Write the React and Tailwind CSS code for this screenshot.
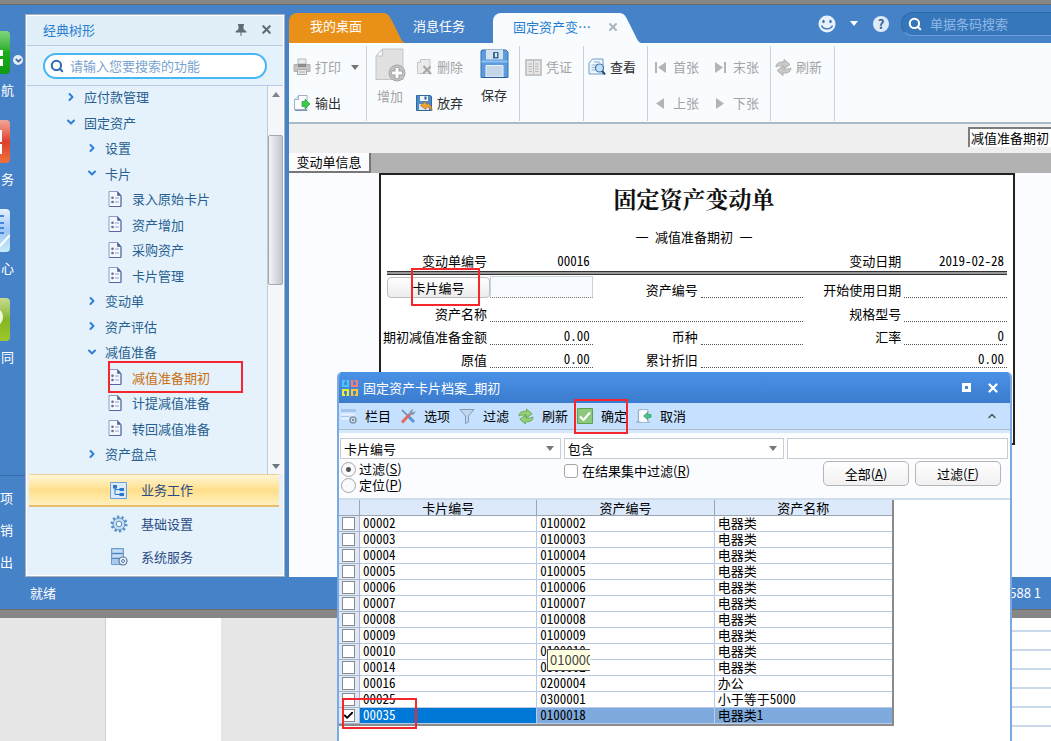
import React from 'react'
import { ChevronDown, ChevronRight, ChevronUp, Search, X, Check } from 'lucide-react'

const treeItems = [
    { label: '应付款管理', level: 0, open: false },
    { label: '固定资产', level: 0, open: true },
    { label: '设置', level: 1, open: false },
    { label: '卡片', level: 1, open: true },
    { label: '录入原始卡片', level: 2 },
    { label: '资产增加', level: 2 },
    { label: '采购资产', level: 2 },
    { label: '卡片管理', level: 2 },
    { label: '变动单', level: 1, open: false },
    { label: '资产评估', level: 1, open: false },
    { label: '减值准备', level: 1, open: true },
    { label: '减值准备期初', level: 2, active: true },
    { label: '计提减值准备', level: 2 },
    { label: '转回减值准备', level: 2 },
    { label: '资产盘点', level: 1, open: false },
    { label: '资产处置', level: 1, open: false },
]

const cards = [
    ['00002', '0100002', '电器类'],
    ['00003', '0100003', '电器类'],
    ['00004', '0100004', '电器类'],
    ['00005', '0100005', '电器类'],
    ['00006', '0100006', '电器类'],
    ['00007', '0100007', '电器类'],
    ['00008', '0100008', '电器类'],
    ['00009', '0100009', '电器类'],
    ['00010', '0100010', '电器类'],
    ['00014', '0500002', '电器类'],
    ['00016', '0200004', '办公'],
    ['00025', '0300001', '小于等于5000'],
    ['00035', '0100018', '电器类1'],
]

/* ---------- icons ---------- */

const DocIcon = () => (
    <svg width="14" height="16" viewBox="0 0 14 16">
        <path d="M1 .5h8.5l3.5 4v11H1z" fill="#f4f7fd" stroke="#8c9cc6" />
        <path d="M9.5 .5v4H13z" fill="#4f5f98" stroke="#4f5f98" strokeWidth=".6" />
        <path d="M13 5v10.5H1.5" fill="none" stroke="#5766a0" />
        <circle cx="4.5" cy="6.8" r="1.3" fill="#6c6c86" />
        <circle cx="4.5" cy="11" r="1.3" fill="#6c6c86" />
        <path d="M7 7h4M7 11h4" stroke="#8aa3d8" />
    </svg>
)

const PrintIcon = () => (
    <svg width="18" height="18" viewBox="0 0 18 18">
        <path d="M5 1h8v5H5z" fill="#eee" stroke="#b5b5b5" />
        <path d="M1 6.5h16v7H1z" fill="#c4c4c4" stroke="#b0b0b0" />
        <path d="M5 6h8v3H5z" fill="#8d8d8d" />
        <path d="M4.5 11.5h9v5h-9z" fill="#eaeaea" stroke="#aaa" />
        <path d="M6 14h6" stroke="#aaa" />
    </svg>
)

const ExportIcon = () => (
    <svg width="18" height="18" viewBox="0 0 18 18">
        <path d="M5.500 1.500H14v14H1.500v-10z" fill="#fbfdff" stroke="#9db1c8" />
        <path d="M5.500 1.500v4h-4" fill="#dfe9f4" stroke="#9db1c8" />
        <path d="M2 16.500h12.500" stroke="#7d96b4" />
        <path d="M9 7.500h3V5l5 5-5 5v-2.500H9z" fill="#3ecb4a" stroke="#2a9c36" strokeWidth=".7" />
    </svg>
)

const AddIcon = () => (
    <svg width="31" height="34" viewBox="0 0 31 34">
        <path d="M7.500 1h20.500v30.500H1V8z" fill="#e1e1e1" stroke="#c4c4c4" />
        <path d="M7.500 1v7H1z" fill="#f5f5f5" stroke="#c4c4c4" />
        <circle cx="22" cy="25" r="8" fill="#c2c2c2" stroke="#a6a6a6" />
        <path d="M22 19.500v11M16.500 25h11" stroke="#9d9d9d" strokeWidth="5" />
        <path d="M22 20v10M17 25h10" stroke="#fff" strokeWidth="3" />
    </svg>
)

const DeleteIcon = () => (
    <svg width="17" height="18" viewBox="0 0 17 18">
        <path d="M4.500 1.500H14v14H1.500v-11z" fill="#ebebeb" stroke="#c6c6c6" />
        <path d="M4.500 1.500v3h-3" fill="#fafafa" stroke="#c6c6c6" />
        <path d="M7.500 8l7.500 8M14.500 8.500L7 15.500" stroke="#a6a6a6" strokeWidth="2" />
    </svg>
)

const AbandonIcon = () => (
    <svg width="17" height="18" viewBox="0 0 17 18">
        <path d="M.5 1.500h14l1 1v14H.5z" fill="#4b8cc6" stroke="#32699f" />
        <path d="M4 2h8v5H4z" fill="#edf4fa" />
        <path d="M8.500 2.500h2v3h-2z" fill="#2e5f90" />
        <path d="M3 10h10v6H3z" fill="#dce9f4" />
        <path d="M10 7.500L4.500 11.500 10 15.500V13c3 0 4.500 1 6 3.500C16 12.500 14 10 10 10z" fill="#f3a33b" stroke="#b46d16" strokeWidth=".7" />
    </svg>
)

const SaveIcon = () => (
    <svg width="29" height="30" viewBox="0 0 29 30">
        <path d="M2 1h24l2 2v25.500H1V2z" fill="#5c9bdd" stroke="#3570ae" />
        <path d="M6 1h17v9.500H6z" fill="#d4e1ee" />
        <path d="M13 3h5.500v6.500H13z" fill="#3b6a99" />
        <path d="M15 4h2v4h-2z" fill="#dbe7f1" />
        <path d="M1.500 12.500h26" stroke="#8fc0ee" strokeWidth="2" />
        <path d="M6 16.500h17V28H6z" fill="#c5d6e8" stroke="#e9f3fb" />
        <path d="M3 28.500h23" stroke="#275b91" />
    </svg>
)

const VoucherIcon = () => (
    <svg width="17" height="17" viewBox="0 0 17 17">
        <path d="M1 1h15v15H1z" fill="#e6e6e6" stroke="#c6c6c6" strokeWidth="2" />
        <path d="M8.500 2v13" stroke="#bbb" />
        <path d="M3.500 5h3.500M3.500 7.500h3.500M3.500 10h3.500M3.500 12.500h3.500M10 5h3.500M10 7.500h3.500M10 10h3.500M10 12.500h3.500" stroke="#b8b8b8" />
    </svg>
)

const ViewIcon = () => (
    <svg width="18" height="18" viewBox="0 0 18 18">
        <path d="M4.500 1H15v15H1V5z" fill="#eff6fd" stroke="#6f9ccb" />
        <path d="M6 4h6M3.500 7h5M3.500 9.500h4M3.500 12h4" stroke="#8db1d8" />
        <circle cx="11.500" cy="10" r="4" fill="#bfe3fa" stroke="#48729e" strokeWidth="1.200" />
        <path d="M14 13l3 3.500" stroke="#27517d" strokeWidth="2.200" />
    </svg>
)

const RefreshIcon = ({ fill, stroke }) => (
    <svg width="17" height="17" viewBox="0 0 17 17">
        <path d="M1 8C1 4 4.500 2.500 9 3V.5l6 5-6 4.500V7.200C6 6.500 3 7 1 8z" fill={fill} stroke={stroke} strokeWidth=".8" />
        <path d="M16 9c0 4-3.500 5.500-8 5v2.500l-6-5L8 7v2.800C11 10.500 14 10 16 9z" fill={fill} stroke={stroke} strokeWidth=".8" />
    </svg>
)

const FirstIcon = () => (
    <svg width="13" height="13" viewBox="0 0 13 13"><path d="M1 1h2v11H1zM12 1v11L4 6.500z" fill="#b4b4b4" /></svg>
)
const LastIcon = () => (
    <svg width="13" height="13" viewBox="0 0 13 13"><path d="M10 1h2v11h-2zM1 1v11l8-5.500z" fill="#b4b4b4" /></svg>
)
const PrevIcon = () => (
    <svg width="13" height="13" viewBox="0 0 13 13"><path d="M10 1v11L2 6.500z" fill="#b4b4b4" /></svg>
)
const NextIcon = () => (
    <svg width="13" height="13" viewBox="0 0 13 13"><path d="M2 1v11l8-5.500z" fill="#b4b4b4" /></svg>
)

const Caret = ({ className }) => (
    <svg width="8" height="5" viewBox="0 0 8 5" className={className}><path d="M0 0h8L4 5z" fill="currentColor" /></svg>
)

const ColumnsIcon = () => (
    <svg width="16" height="16" viewBox="0 0 16 16">
        <path d="M0 1h15v3H0z" fill="#a5c4ec" />
        <path d="M0 6.500h14M0 10.500h8" stroke="#e9f3ff" strokeWidth="2" />
        <path d="M0 8.500h8" stroke="#a9c5e8" />
        <circle cx="12" cy="12" r="3" fill="#d5dde6" stroke="#8496ab" strokeWidth="1.500" />
        <circle cx="12" cy="12" r="1" fill="#63758a" />
    </svg>
)

const ToolsIcon = () => (
    <svg width="16" height="16" viewBox="0 0 16 16">
        <path d="M2 2l6 6" stroke="#5585bd" strokeWidth="1.500" />
        <path d="M8 8l6 6" stroke="#5d93d6" strokeWidth="3" />
        <path d="M2 14.500L10 6" stroke="#e2685c" strokeWidth="2.800" />
        <path d="M9.500 6.500c-.5-3 1.500-5 4-5.500L12 3.500l1 1 2.500-1.500c0 2.500-2.500 4.500-4.500 4z" fill="#8399b3" />
    </svg>
)

const FunnelIcon = () => (
    <svg width="16" height="16" viewBox="0 0 16 16">
        <path d="M1 1.500h14L9.500 8v6l-3 1.500V8z" fill="#c2d5ea" stroke="#7f9cbb" />
    </svg>
)

const OkIcon = () => (
    <svg width="16" height="16" viewBox="0 0 16 16">
        <path d="M.5 .5h15v15H.5z" fill="#8cc97c" stroke="#5fa24e" />
        <path d="M3 8.500l3.500 3.500L13 4.500" fill="none" stroke="#fff" strokeWidth="2.200" />
    </svg>
)

const CancelIcon = () => (
    <svg width="17" height="16" viewBox="0 0 17 16">
        <path d="M2.500 14.500v-13h10v13" fill="#f3f7fa" stroke="#8e9fb0" />
        <path d="M0 14.500h15" stroke="#8e9fb0" />
        <path d="M5 2h7v12H5z" fill="#fff" />
        <path d="M16 6.500h-3.500V4L8 8l4.500 4V9.500H16z" fill="#4dc488" stroke="#2c9962" strokeWidth=".7" />
    </svg>
)

const AppLogo = () => (
    <svg width="16" height="16" viewBox="0 0 16 16" fill="none" strokeWidth="2">
        <path d="M3 1H1v5h5V1H4.500" stroke="#4cc5ff" />
        <path d="M11.500 1H10v5h5V1h-2" stroke="#ff7a70" />
        <path d="M3 15H1v-5h5v5H4.500" stroke="#e6ee3b" />
        <path d="M11.500 15H10v-5h5v5h-2" stroke="#ffc53a" />
    </svg>
)

const PinIcon = () => (
    <svg width="12" height="12" viewBox="0 0 12 12" fill="#5e6c78">
        <path d="M3 0h6v1.500H8.500V5L11.500 7.500v1H.5v-1L3.500 5V1.500H3zM5.500 8.500h1V12h-1z" />
    </svg>
)

const TreeIcon = () => (
    <svg width="17" height="17" viewBox="0 0 17 17">
        <path d="M.5 .5h16v16H.5z" fill="#d9ebfb" stroke="#6fa0d6" />
        <path d="M3 3h4v3.500H3zM9.500 6h4.500v3H9.500zM9.500 11h4.500v3H9.500z" fill="#2f78c4" />
        <path d="M5 6v6.500h5M5 7.500h5" fill="none" stroke="#2f78c4" />
    </svg>
)

const GearIcon = () => (
    <svg width="18" height="18" viewBox="0 0 18 18">
        <circle cx="9" cy="9" r="7" fill="none" stroke="#5a8fc5" strokeWidth="3" strokeDasharray="2.200 2.200" />
        <circle cx="9" cy="9" r="6" fill="#c7e0f5" stroke="#5a8fc5" />
        <circle cx="9" cy="9" r="2.800" fill="#f0f7fd" stroke="#5a8fc5" />
    </svg>
)

const ServerIcon = () => (
    <svg width="18" height="18" viewBox="0 0 18 18">
        <path d="M1.500 .5h12v16h-12z" fill="#a8cbee" stroke="#6d9ccc" />
        <path d="M2 5.500h11M2 10.500h11" stroke="#4f83b9" />
        <path d="M3 3h9M3 8h9" stroke="#e2f0fc" />
        <circle cx="13" cy="13" r="4" fill="#eef4fb" stroke="#54749b" strokeWidth="1.200" />
        <circle cx="13" cy="13" r="1.500" fill="none" stroke="#54749b" />
    </svg>
)

const SmileIcon = () => (
    <svg width="18" height="18" viewBox="0 0 18 18">
        <circle cx="9" cy="9" r="8.500" fill="#e6f1fc" />
        <ellipse cx="5.500" cy="6.500" rx="1.200" ry="1.700" fill="#3a6fae" />
        <ellipse cx="12.500" cy="6.500" rx="1.200" ry="1.700" fill="#3a6fae" />
        <path d="M3.500 10.500c2 4.500 9 4.500 11 0" fill="none" stroke="#3a6fae" strokeWidth="1.300" />
    </svg>
)

/* ---------- left side ---------- */

const RailItem = ({ label, tile, children }) => (
    <a href="#" className="flex h-[89px] flex-col items-start">
        <span className={`block h-[43px] w-[10px] rounded-r-[4px] ${tile}`}>{children}</span>
        <span className="mt-[6px] pl-px">{label}</span>
    </a>
)

const Rail = () => (
    <nav className="flex w-[25px] shrink-0 flex-col overflow-hidden pt-[17px] text-[13px] text-white">
        <div className="flex">
            <div className="flex flex-col">
                <RailItem label="航" tile="bg-linear-to-b from-[#7fd67c] via-[#1cab1c] to-[#0f9a12]">
                    <svg width="10" height="43"><path d="M0 19h3v6H0zM0 28h3v7H0z" fill="#fff" /></svg>
                </RailItem>
                <RailItem label="务" tile="bg-linear-to-b from-[#f3a59b] via-[#dc3f2b] to-[#f0703c]">
                    <svg width="10" height="43"><path d="M0 10h2v12H0zM0 24h2v10H0z" fill="#fff" /></svg>
                </RailItem>
                <RailItem label="心" tile="bg-linear-to-b from-[#e4f0ff] via-[#9cc6f7] to-[#c9ecf8]">
                    <svg width="10" height="43">
                        <path d="M0 7h4M0 14h4M0 19h4M0 24h4" stroke="#4686d8" strokeWidth="2" />
                        <path d="M0 37L10 26" stroke="#fff" strokeWidth="2" />
                    </svg>
                </RailItem>
                <RailItem label="同" tile="bg-linear-to-b from-[#c8dc8e] via-[#86b526] to-[#9cc92b]">
                    <svg width="10" height="43"><path d="M0 12c4 4 4 10 0 14" fill="#f0f7dc" /></svg>
                </RailItem>
            </div>
            <button aria-label="更多" className="mt-6 -ml-px flex h-[10px] w-[10px] shrink-0 items-center justify-center rounded-full bg-[#e2ecf8] text-[#3a5f8c]">
                <ChevronDown size={9} strokeWidth={4} />
            </button>
        </div>
        <div className="mt-auto flex h-[102px] flex-col border-t border-[#386eae] pt-[6px]">
            <a href="#" className="h-8 leading-8">项</a>
            <a href="#" className="h-8 leading-8">销</a>
            <a href="#" className="h-8 leading-8">出</a>
        </div>
    </nav>
)

const TreeRow = ({ item }) => {
    const pad = ['pl-[36px]', 'pl-[57px]', 'pl-[80px]'][item.level]
    return (
        <li className={`flex items-center ${pad}`}>
            <a href="#" className={`relative flex h-full items-center whitespace-nowrap ${item.active ? 'text-[#c96f12]' : 'text-[#265f92]'}`}>
                {item.level === 2 ? (
                    <span className="mr-[9px] flex w-4 justify-center"><DocIcon /></span>
                ) : (
                    <span className="mr-[5px] flex w-4 justify-center text-[#2f7fd6]">
                        {item.open ? <ChevronDown size={12} strokeWidth={4} /> : <ChevronRight size={12} strokeWidth={4} />}
                    </span>
                )}
                {item.label}
                {item.active && <span className="pointer-events-none absolute -top-1 left-px h-8 w-[135px] border-2 border-[#f5262c]"></span>}
            </a>
        </li>
    )
}

const SidePanel = () => (
    <aside className="flex w-[260px] shrink-0 flex-col border border-[#a9b2bb] bg-white p-px text-[13px]">
        <div className="flex h-[30px] items-center border-b border-[#b5cde8] bg-[#e1eff9] pr-2.5 pb-0.5 pl-4">
            <h2 className="flex-1 text-[#2b7fd2]">经典树形</h2>
            <button aria-label="固定" className="mr-[13px]"><PinIcon /></button>
            <button aria-label="关闭" className="text-[#5e6c78]"><X size={13} strokeWidth={4} /></button>
        </div>
        <div className="flex h-10 items-center border-b border-[#b5cde8] bg-[#e6f2fb] px-4">
            <label className="flex h-[26px] w-full items-center gap-[6px] rounded-full border-2 border-[#45b7f5] bg-white px-[5px]">
                <Search size={14} strokeWidth={3.500} className="shrink-0 text-[#2b6cb5]" />
                <input aria-label="功能搜索" placeholder="请输入您要搜索的功能" className="w-full min-w-0 bg-transparent outline-none placeholder:text-[#7aa3d0]" />
            </label>
        </div>
        <div className="flex h-[388px] overflow-hidden bg-[#e6f2fb]">
            <ul className="-mt-0.5 grid h-[408px] flex-1 auto-rows-fr">
                {treeItems.map((item) => <TreeRow key={item.label} item={item} />)}
            </ul>
            <div className="flex w-4 flex-col items-center border-l border-[#c3c9cf] bg-[#f4f6f9]">
                <div className="flex h-[49px] w-full justify-center pt-[6px] text-[#7c858e]"><Caret className="rotate-180" /></div>
                <div className="h-[150px] w-full rounded-xs border border-[#a3a7b0] bg-linear-to-r from-[#f4f4f7] to-[#c3c5d0]"></div>
                <div className="mt-auto flex h-[10px] text-[#6d7780]"><Caret /></div>
            </div>
        </div>
        <nav className="flex flex-1 flex-col bg-[#e6f2fb] pr-1 pb-0.5 pl-0.5 text-[#2a4a86]">
            <a href="#" className="flex h-[33px] items-center gap-[14px] border-t border-b-2 border-t-[#eccf96] border-b-[#e9bd6c] bg-linear-to-b from-[#fff6d4] via-[#ffdf8a] to-[#fff0bd] pl-[81px]"><TreeIcon />业务工作</a>
            <a href="#" className="flex h-[33px] items-center gap-[13px] pl-[81px]"><GearIcon />基础设置</a>
            <a href="#" className="flex h-[33px] items-center gap-[13px] pl-[81px]"><ServerIcon />系统服务</a>
        </nav>
    </aside>
)

/* ---------- top of the work area ---------- */

const TabEdge = ({ fill }) => (
    <svg width="24" height="30" viewBox="0 0 24 30" className="shrink-0">
        <path d="M0 0c4 0 6 2 8 6l9 18c2 4 3 6 7 6H0z" fill={fill} />
    </svg>
)

const TabBar = () => (
    <header className="flex h-[38px] items-end text-[13px] text-white">
        <button className="h-[30px] w-[94px] rounded-tl-lg bg-[#e89017] pb-1">我的桌面</button>
        <TabEdge fill="#e89017" />
        <button className="h-[30px] w-[86px] pr-[22px] pb-1">消息任务</button>
        <div className="flex h-[30px] w-[126px] shrink-0 items-center justify-between rounded-tl-lg bg-[#f9fcff] pb-[3px] pl-5 text-[#1f7bd0]">
            <button>固定资产变⋯</button>
            <button aria-label="关闭标签" className="text-[#a9b4bf]"><X size={12} strokeWidth={4} /></button>
        </div>
        <TabEdge fill="#f9fcff" />
        <div className="flex h-full flex-1 items-center justify-end pb-px">
            <button aria-label="心情"><SmileIcon /></button>
            <button aria-label="更多选项" className="ml-[14px]"><Caret /></button>
            <button aria-label="帮助" className="ml-[15px] h-4 w-4 rounded-full bg-[#dfebf8] text-[13px] leading-4 font-bold text-[#35649b]">?</button>
            <label className="ml-3 flex h-6 w-[150px] items-center gap-2 rounded-l-full border-y border-l border-[#2f68a8] border-b-[#6ba0dc] bg-[#3676ba] pl-[6px]">
                <Search size={14} strokeWidth={3.500} className="shrink-0" />
                <input aria-label="单据搜索" placeholder="单据条码搜索" className="w-full min-w-0 bg-transparent outline-none placeholder:text-[#8fb9e6]" />
            </label>
        </div>
    </header>
)

const Tool = ({ icon, label, disabled = true }) => (
    <button className={`flex h-9 items-center gap-1 whitespace-nowrap ${disabled ? 'text-[#a3a3a3]' : 'text-[#2e2e2e]'}`}>
        <span className="flex w-[18px] justify-center">{icon}</span>
        {label}
    </button>
)

const Group = ({ className, children }) => (
    <div className={`my-[3px] flex h-[75px] shrink-0 border-r border-[#cdd1d5] ${className}`}>{children}</div>
)

const Ribbon = () => (
    <div className="flex h-[81px] border-b-2 border-[#a9bacb] bg-[#f9fcff] text-[13px]">
        <Group className="w-[78px] pl-1">
            <div className="flex flex-col pt-[3px]">
                <Tool icon={<PrintIcon />} label="打印" />
                <Tool icon={<ExportIcon />} label="输出" disabled={false} />
            </div>
            <button aria-label="打印选项" className="ml-[10px] h-[43px] text-[#777]"><Caret /></button>
        </Group>
        <Group className="w-[153px] pl-2">
            <button className="flex w-[30px] flex-col items-center gap-1 pt-0.5 text-[#a3a3a3]"><AddIcon /><span>增加</span></button>
            <div className="flex flex-col pt-[3px] pl-[10px]">
                <Tool icon={<DeleteIcon />} label="删除" />
                <Tool icon={<AbandonIcon />} label="放弃" disabled={false} />
            </div>
            <button className="ml-4 flex w-[30px] flex-col items-center gap-[6px] pt-[3px] text-[#2e2e2e]"><SaveIcon /><span>保存</span></button>
        </Group>
        <Group className="w-[64px] pt-[3px] pl-1"><Tool icon={<VoucherIcon />} label="凭证" /></Group>
        <Group className="w-[64px] pt-[3px] pl-1"><Tool icon={<ViewIcon />} label="查看" disabled={false} /></Group>
        <Group className="w-[123px] gap-[12px] pt-[3px] pl-[3px]">
            <div>
                <Tool icon={<FirstIcon />} label="首张" />
                <Tool icon={<PrevIcon />} label="上张" />
            </div>
            <div>
                <Tool icon={<LastIcon />} label="末张" />
                <Tool icon={<NextIcon />} label="下张" />
            </div>
        </Group>
        <Group className="w-[64px] pt-[3px] pl-[3px]"><Tool icon={<RefreshIcon fill="#c9c9c9" stroke="#a5a5a5" />} label="刷新" /></Group>
    </div>
)

/* ---------- change form ---------- */

const Label = ({ children }) => <div className="self-end pr-[3px] text-right leading-4 whitespace-nowrap">{children}</div>

const Value = ({ span = '', children }) => (
    <div className={`h-[17px] self-end border-b border-dotted border-[#555] pr-[3px] text-right leading-4 ${span}`}>{children}</div>
)

const ChangeForm = () => (
    <section className="mr-9 ml-[90px] h-[272px] border-2 border-[#222] bg-white pt-2 pr-[6px] font-['Noto_Sans_Mono_CJK_SC','Noto_Sans_CJK_SC',sans-serif] text-[13px] text-black">
        <h1 className="text-center font-['Noto_Serif_CJK_SC','Noto_Sans_CJK_SC',serif] text-[23px] leading-8 font-bold text-[#111]">固定资产变动单</h1>
        <p className="mt-3 text-center leading-5">一 减值准备期初 一</p>
        <div className="mt-1 grid grid-cols-[109px_1fr_108px_1fr_101px_1fr] leading-5">
            <div className="pr-[3px] text-right">变动单编号</div>
            <div className="pr-[3px] text-right">00016</div>
            <div className="col-span-2"></div>
            <div className="pr-[3px] text-right">变动日期</div>
            <div className="pr-[3px] text-right">2019-02-28</div>
        </div>
        <div className="ml-[6px] h-1 border-y border-[#333] bg-[#999]"></div>
        <div className="relative grid h-[93px] auto-rows-fr grid-cols-[109px_1fr_108px_1fr_101px_1fr]">
            <button className="ml-[6px] h-[21px] self-end rounded-[4px] border border-[#bfbfbf] bg-linear-to-b from-white to-[#ececec] leading-4">卡片编号</button>
            <input aria-label="卡片编号" className="h-[22px] w-full min-w-0 self-end border border-[#c9d3dd] border-b-[#777] bg-[#f7faff] outline-none [border-bottom-style:dotted]" />
            <Label>资产编号</Label><Value />
            <Label>开始使用日期</Label><Value />

            <Label>资产名称</Label><Value span="col-span-3" />
            <Label>规格型号</Label><Value />

            <Label>期初减值准备金额</Label><Value>0.00</Value>
            <Label>币种</Label><Value />
            <Label>汇率</Label><Value>0</Value>

            <Label>原值</Label><Value>0.00</Value>
            <Label>累计折旧</Label><Value span="col-span-3">0.00</Value>
            <span className="pointer-events-none absolute -top-[7px] left-[30px] h-[38px] w-[69px] border-2 border-[#f5262c]"></span>
        </div>
    </section>
)

const WorkArea = () => (
    <main className="ml-1 flex min-w-0 flex-1 flex-col">
        <TabBar />
        <Ribbon />
        <div className="flex h-[29px] items-center justify-end bg-[#efefef] pb-1">
            <select aria-label="模板" className="h-[20px] w-[83px] appearance-none border-t-2 border-l-2 border-[#7d7d7d] bg-white pl-px text-[13px] leading-4 text-black">
                <option>减值准备期初</option>
            </select>
        </div>
        <div className="flex h-5 bg-[#b2b2b2] text-[13px]">
            <button className="w-[82px] border-r-2 border-b-2 border-[#777] bg-[#fcfcfe] leading-4 text-black">变动单信息</button>
        </div>
        <div className="flex-1 bg-[#fbfcff]"><ChangeForm /></div>
    </main>
)

/* ---------- dialog ---------- */

const DialogTool = ({ icon, label, marked }) => (
    <button className="relative flex items-center gap-2 whitespace-nowrap">
        <span className="flex w-4 justify-center">{icon}</span>
        {label}
        {marked && <span className="pointer-events-none absolute -top-[7px] -left-[3px] h-[35px] w-[54px] border-2 border-[#f5262c]"></span>}
    </button>
)

const FilterSelect = ({ label, value }) => (
    <div className="grid h-[21px] items-center">
        <select aria-label={label} className="col-start-1 row-start-1 h-full w-full appearance-none border border-[#c9cdd3] bg-white pl-[3px] leading-4">
            <option>{value}</option>
        </select>
        <Caret className="pointer-events-none col-start-1 row-start-1 mr-[7px] justify-self-end text-[#777]" />
    </div>
)

const Radio = ({ label, hotkey, checked }) => (
    <label className="flex h-4 items-center gap-[3px]">
        <input type="radio" name="mode" defaultChecked={checked} className="h-[15px] w-[15px] appearance-none rounded-full border border-[#a5a5a5] bg-[#fafafa] checked:bg-[radial-gradient(#555_2px,#fafafa_3px)]" />
        <span className="leading-4">{label}(<u>{hotkey}</u>)</span>
    </label>
)

const CardDialog = () => (
    <div role="dialog" aria-label="固定资产卡片档案" className="absolute top-[372px] right-[39px] bottom-0 left-[337px] flex flex-col overflow-hidden rounded-t-[5px] border-x-2 border-[#7ba9e2] bg-white text-[13px] text-black">
        <div className="-mx-0.5 flex h-[31px] shrink-0 items-center bg-linear-to-b from-[#4a92e6] to-[#3b7bce] pr-3 pl-[5px] text-white">
            <AppLogo />
            <h2 className="ml-[5px] flex-1">固定资产卡片档案_期初</h2>
            <button aria-label="最大化" className="mr-[15px] h-[9px] w-[9px] border-[3px] border-white"></button>
            <button aria-label="关闭窗口"><X size={14} strokeWidth={4} /></button>
        </div>
        <div className="flex h-[27px] shrink-0 items-center gap-[9px] border-b border-[#b3bcc6] bg-[#c5e1ff] pr-[12px] pl-0.5">
            <DialogTool icon={<ColumnsIcon />} label="栏目" />
            <DialogTool icon={<ToolsIcon />} label="选项" />
            <DialogTool icon={<FunnelIcon />} label="过滤" />
            <DialogTool icon={<RefreshIcon fill="#93cf77" stroke="#5d9c42" />} label="刷新" />
            <DialogTool icon={<OkIcon />} label="确定" marked />
            <DialogTool icon={<CancelIcon />} label="取消" />
            <button aria-label="收起" className="ml-auto text-[#555]"><ChevronUp size={12} strokeWidth={3} /></button>
        </div>
        <div className="shrink-0 border-t-[3px] border-b-2 border-t-[#d5e9fc] border-b-[#cfdcea] bg-[#fbfcff] pt-[5px]">
            <div className="grid grid-cols-3 gap-[3px] pr-0.5 pl-px">
                <FilterSelect label="筛选字段" value="卡片编号" />
                <FilterSelect label="筛选条件" value="包含" />
                <input aria-label="筛选内容" className="h-[21px] w-full min-w-0 border border-[#c9cdd3] bg-white px-1 outline-none" />
            </div>
            <div className="flex h-[39px] items-start pt-0.5 pr-[9px] pl-0.5">
                <div className="w-[223px]">
                    <Radio label="过滤" hotkey="S" checked />
                    <Radio label="定位" hotkey="P" />
                </div>
                <label className="flex h-5 flex-1 items-center gap-1">
                    <input type="checkbox" className="h-[14px] w-[14px] appearance-none rounded-[3px] border border-[#a5a5a5] bg-white" />
                    <span>在结果集中过滤(<u>R</u>)</span>
                </label>
                <button className="h-[25px] w-[86px] rounded-[5px] border border-[#b5b5b5] bg-linear-to-b from-white to-[#f0f0f0]">全部(<u>A</u>)</button>
                <button className="ml-[6px] h-[25px] w-[86px] rounded-[5px] border border-[#b5b5b5] bg-linear-to-b from-white to-[#f0f0f0]">过滤(<u>F</u>)</button>
            </div>
        </div>
        <div className="relative flex-1">
            <table className="w-[555px] table-fixed border-separate border-spacing-0 border-r-2 border-b-2 border-[#8b8b8b] font-['Noto_Sans_Mono_CJK_SC','Noto_Sans_CJK_SC',sans-serif] leading-[14px]">
                <colgroup>
                    <col className="w-[21px]" />
                    <col />
                    <col />
                    <col />
                </colgroup>
                <thead>
                    <tr className="bg-[#dbe9fb]">
                        <th aria-label="选择" className="h-4 border-r border-b border-[#9aa5b3] p-0"></th>
                        <th className="border-r border-b border-[#9aa5b3] p-0 font-normal">卡片编号</th>
                        <th className="border-r border-b border-[#9aa5b3] p-0 font-normal">资产编号</th>
                        <th className="border-b border-[#9aa5b3] p-0 font-normal">资产名称</th>
                    </tr>
                </thead>
                <tbody>
                    {cards.map(([card, asset, name]) => {
                        const selected = card === '00035'
                        return (
                            <tr key={card} className={selected ? 'bg-[#7faadd] align-top' : 'bg-white align-top'}>
                                <td className="h-4 border-r border-b border-[#aab6c4] bg-[#dbe9fb] p-0">
                                    <span className="grid h-[15px] items-center pl-[3px]">
                                        <input type="checkbox" aria-label={card} defaultChecked={selected} className="col-start-1 row-start-1 h-[13px] w-[13px] appearance-none border border-[#8a8a8a] bg-white" />
                                        {selected && <Check size={11} strokeWidth={4} className="pointer-events-none col-start-1 row-start-1 ml-px" />}
                                    </span>
                                </td>
                                <td className={`border-r border-b border-[#b9cbe6] py-0 pr-0 pl-[3px] ${selected ? 'bg-[#0078d7] text-white' : ''}`}>{card}</td>
                                <td className="border-r border-b border-[#b9cbe6] py-0 pr-0 pl-[3px]">{asset}</td>
                                <td className="border-b border-[#b9cbe6] py-0 pr-0 pl-[3px]">{name}</td>
                            </tr>
                        )
                    })}
                </tbody>
            </table>
            <div role="tooltip" className="absolute top-[149px] left-[208px] h-[22px] w-[43px] overflow-hidden border-y border-l border-[#555] bg-[#ffffe1] pl-0.5 leading-5 text-[#444]">010000</div>
            <span className="pointer-events-none absolute top-[198px] left-[3px] h-[31px] w-[75px] border-2 border-[#f5262c]"></span>
        </div>
    </div>
)

const App = () => {
    return (
        <div className="relative flex min-h-screen flex-col overflow-hidden bg-[#868686] font-['Noto_Sans_CJK_SC',sans-serif]">
            <div className="h-[5px] border-b border-[#6c6c6c]"></div>
            <div className="bg-[#4682c8]">
                <div className="flex">
                    <div className="flex pt-[9px]">
                        <Rail />
                        <SidePanel />
                    </div>
                    <WorkArea />
                </div>
                <footer className="flex h-8 items-center justify-between pr-[10px] pl-[30px] text-[13px] text-white">
                    <span>就绪</span>
                    <span>588 1</span>
                </footer>
            </div>
            <div className="h-[9px] border-t border-[#6c6c6c]"></div>
            {/* sheet that lies behind the main window */}
            <div className="flex flex-1 bg-[#e6e6e6]">
                <div className="w-[106px] border-r border-[#cfcfcf]"></div>
                <div className="w-[115px] bg-white"></div>
                <div className="ml-auto w-[39px] bg-white">
                    <div className="h-[14px] border-b-2 border-[#c9d8ea]"></div>
                    {[1, 2, 3, 4, 5].map((row) => <div key={row} className="h-[19px] border-b-2 border-[#c9d8ea]"></div>)}
                </div>
            </div>
            <CardDialog />
        </div>
    )
}

export default App
